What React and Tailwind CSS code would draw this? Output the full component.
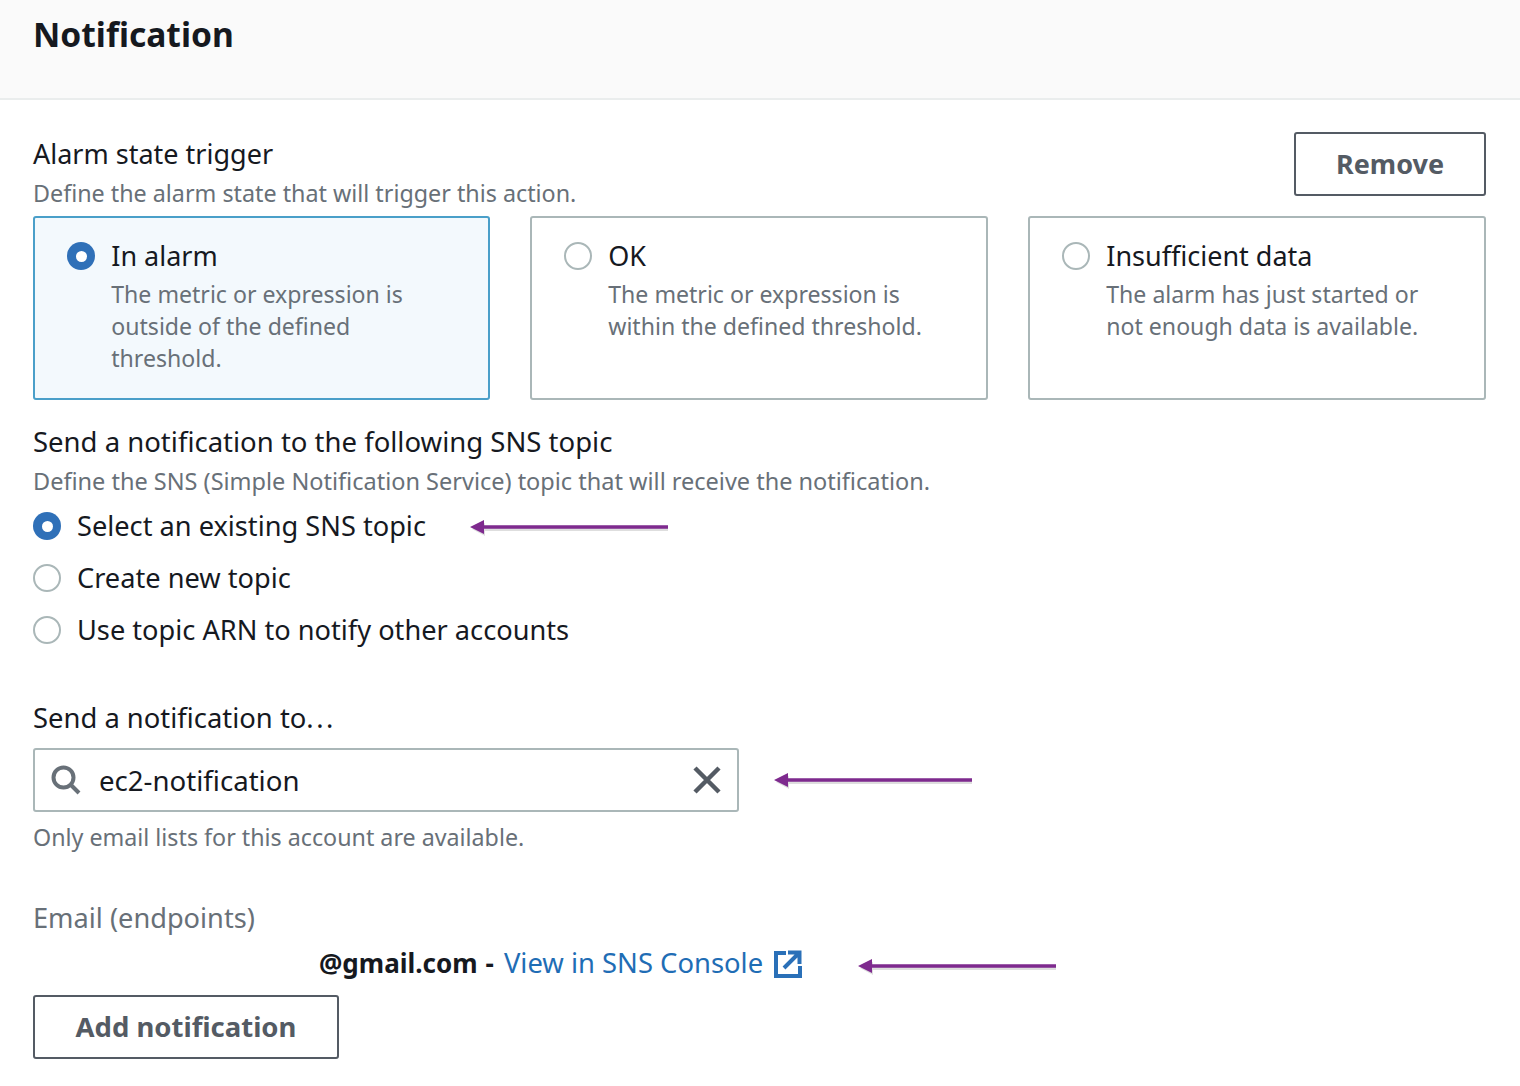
const font = { fontFamily: '"Noto Sans", sans-serif' };

function Radio({ on }) {
  return on ? (
    <span className="flex h-[28px] w-[28px] shrink-0 items-center justify-center rounded-full bg-[#2f70b8]">
      <span className="h-[11px] w-[11px] rounded-full bg-white" />
    </span>
  ) : (
    <span className="h-[28px] w-[28px] shrink-0 rounded-full border-2 border-[#aab7b8] bg-white" />
  );
}

function Arrow() {
  return (
    <svg width="200" height="20" viewBox="0 0 200 20" className="block shrink-0">
      <path d="M3 11 L16 5 L16 10 L199 10 L199 13 L16 13 L16 18 Z" fill="#000" opacity="0.13" />
      <path d="M1 9 L15 2 L15 7.2 L199 7.2 L199 10.8 L15 10.8 L15 16 Z" fill="#7e2a8e" />
    </svg>
  );
}

function Card({ on, title, lines }) {
  return (
    <div className={`flex h-[184px] gap-[16.25px] rounded-[3px] border-2 px-[32px] pt-[24px] ${on ? "border-[#4a9fc9] bg-[#f3f9fd]" : "border-[#aab7b8] bg-white"}`}>
      <Radio on={on} />
      <div>
        <div className="-mt-px text-[27px] leading-[30px] text-[#16191f]">{title}</div>
        <div className="mt-[7px] text-[23.1px] leading-[32px] text-[#687078]">
          {lines.map((l) => (
            <div key={l}>{l}</div>
          ))}
        </div>
      </div>
    </div>
  );
}

function Option({ on, label, children }) {
  return (
    <div className="flex h-[52px] items-center">
      <Radio on={on} />
      <span className="ml-4 text-[27.2px] leading-[32px] text-[#16191f]">{label}</span>
      {children}
    </div>
  );
}

export default function App() {
  return (
    <div className="h-[1086px] w-[1520px] overflow-hidden bg-white" style={font}>
      <div className="h-[100px] border-b-2 border-[#eaeded] bg-[#fafafa] px-[33px] pt-[11px]">
        <h1 className="text-[33.6px] font-bold leading-[46px] text-[#16191f]">Notification</h1>
      </div>
      <div className="pl-[33px] pr-[34px] pt-[32px]">
        <div className="flex h-[77px] items-start justify-between">
          <div className="pt-[6px]">
            <div className="text-[27px] leading-[32px] text-[#16191f]">Alarm state trigger</div>
            <div className="mt-[7px] text-[23.3px] leading-[32px] text-[#687078]">Define the alarm state that will trigger this action.</div>
          </div>
          <button className="h-[64px] w-[192px] rounded-[3px] border-2 border-[#545b64] bg-white text-[27px] font-bold text-[#545b64]">Remove</button>
        </div>
        <div className="mt-[7px] grid grid-cols-[457px_458px_458px] gap-[40px]">
          <Card on title="In alarm" lines={["The metric or expression is", "outside of the defined", "threshold."]} />
          <Card title="OK" lines={["The metric or expression is", "within the defined threshold."]} />
          <Card title="Insufficient data" lines={["The alarm has just started or", "not enough data is available."]} />
        </div>
        <div className="mt-[26px] text-[27.5px] leading-[32px] text-[#16191f]">Send a notification to the following SNS topic</div>
        <div className="mt-[7px] text-[23.5px] leading-[32px] text-[#687078]">Define the SNS (Simple Notification Service) topic that will receive the notification.</div>
        <div className="mt-[3px]">
          <Option on label="Select an existing SNS topic">
            <span className="ml-[43px] mt-[4px]"><Arrow /></span>
          </Option>
          <Option label="Create new topic" />
          <Option label="Use topic ARN to notify other accounts" />
        </div>
        <div className="mt-[46px] text-[27.4px] leading-[32px] text-[#16191f]">Send a notification to<span className="tracking-[2.5px]">...</span></div>
        <div className="mt-[14px] flex items-center">
          <div className="flex h-[64px] w-[706px] items-center rounded-[3px] border-2 border-[#aab7b8] bg-white pl-[16px] pr-[15px]">
            <svg width="30" height="30" viewBox="0 0 30 30" fill="none" stroke="#687078" strokeWidth="4" className="shrink-0">
              <circle cx="12.5" cy="12.5" r="10" />
              <path d="M19.5 19.5 L28 28" />
            </svg>
            <span className="ml-[18px] flex-1 text-[27.6px] leading-[32px] text-[#16191f]">ec2-notification</span>
            <svg width="30" height="30" viewBox="0 0 30 30" fill="none" stroke="#545b64" strokeWidth="4.5" className="shrink-0">
              <path d="M3 3 L27 27 M27 3 L3 27" />
            </svg>
          </div>
          <span className="ml-[34px] mt-[2px]"><Arrow /></span>
        </div>
        <div className="mt-[9px] text-[23.25px] leading-[32px] text-[#687078]">Only email lists for this account are available.</div>
        <div className="mt-[49px] text-[27.2px] leading-[32px] text-[#687078]">Email (endpoints)</div>
        <div className="mt-[13px] flex h-[32px] items-center pl-[286px]">
          <span className="text-[26px] font-bold leading-[32px] text-[#16191f]">@gmail.com</span>
          <span className="ml-[8px] text-[26px] font-bold leading-[32px] text-[#16191f]">-</span>
          <a className="ml-[10px] text-[27.4px] leading-[32px] text-[#1f6db5]">View in SNS Console</a>
          <svg width="30" height="30" viewBox="0 0 30 30" fill="none" stroke="#2a70b8" strokeWidth="4" className="ml-[9.5px] mt-[2px] shrink-0">
            <path d="M13 4 H3 V27 H27 V17" />
            <path d="M11 19 L25 5 M15 3.5 H26.5 V15" />
          </svg>
          <span className="ml-[54px] mt-[8px]"><Arrow /></span>
        </div>
        <button className="mt-[16px] block h-[64px] w-[306px] rounded-[3px] border-2 border-[#545b64] bg-white text-[27.5px] font-bold text-[#545b64]">Add notification</button>
      </div>
    </div>
  );
}
